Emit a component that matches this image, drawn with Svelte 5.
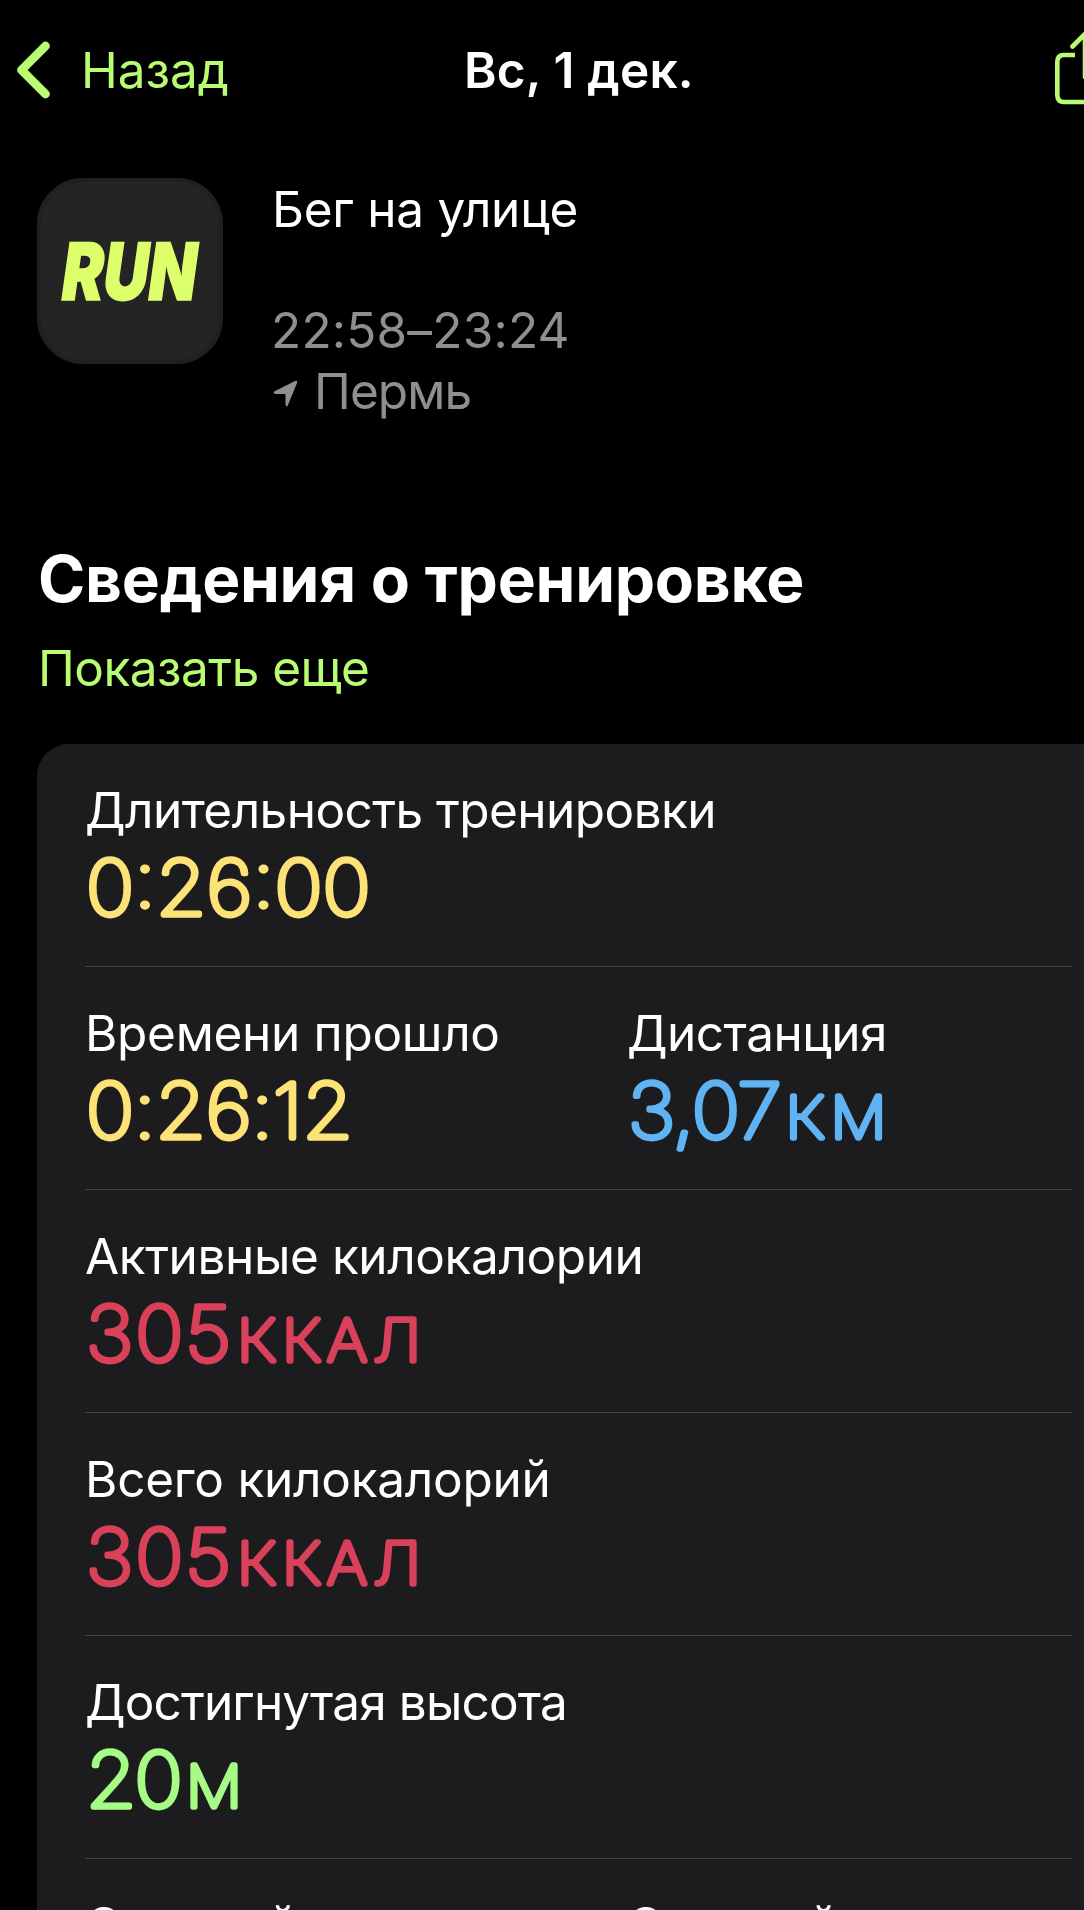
<script lang="ts">
    interface Metric {
        label: string;
        tracking: number;
        value?: string;
        valueTracking?: number;
        unit?: string;
        unitGap?: number;
        color?: string;
    }

    const date = 'Вс, 1 дек.';
    const city = 'Пермь';

    const calories = { value: '305', valueTracking: 1.8, unit: 'ККАЛ', unitGap: 4, color: 'energy' };

    const rows: Metric[][] = [
        [{ label: 'Длительность тренировки', tracking: -0.55, value: '0:26:00', valueTracking: 0, color: 'time' }],
        [
            { label: 'Времени прошло', tracking: -0.3, value: '0:26:12', valueTracking: -0.3, color: 'time' },
            { label: 'Дистанция', tracking: -0.5, value: '3,07', valueTracking: -0.8, unit: 'КМ', unitGap: 4.5, color: 'distance' }
        ],
        [{ label: 'Активные килокалории', tracking: -0.4, ...calories }],
        [{ label: 'Всего килокалорий', tracking: -0.25, ...calories }],
        [{ label: 'Достигнутая высота', tracking: -0.85, value: '20', valueTracking: -2, unit: 'М', unitGap: 5.5, color: 'elevation' }],
        [
            { label: 'Средний темп', tracking: -0.3 },
            { label: 'Средний пульс', tracking: -0.5 }
        ]
    ];
</script>

<main class="screen">
    <header class="nav">
        <button class="back">
            <svg width="36" height="60" viewBox="0 0 36 60" fill="none">
                <path d="M30.5 6 L6.5 30 L30.5 54" stroke="currentColor" stroke-width="8.8" stroke-linecap="round" stroke-linejoin="round" />
            </svg>
            <span>Назад</span>
        </button>
        <h1>{date}</h1>
        <button class="share" aria-label="Поделиться">
            <svg width="60" height="78" viewBox="0 0 60 78" fill="none" stroke="currentColor" stroke-width="4.6">
                <path d="M21 25 H10 Q3.3 25 3.3 32 V65 Q3.3 72 10 72 H53 Q59 72 59 65 V32 Q59 25 53 25 H41" />
                <path d="M31 47 V4 M18.5 16.5 L31 4 L43.5 16.5" stroke-linecap="round" stroke-linejoin="round" />
            </svg>
        </button>
    </header>

    <section class="workout">
        <div class="app-icon"><span>RUN</span></div>
        <div class="info">
            <p class="name">Бег на улице</p>
            <p class="muted time-range">22:58–23:24</p>
            <p class="muted place">
                <svg width="25" height="27" viewBox="0 0 25 27">
                    <path d="M22 1 Q25 0 24 3 L15 25 Q13.5 28 12.5 24.5 V15 Q12.5 14 11.5 14 H2.5 Q-1 13 2 11 Z" fill="currentColor" />
                </svg>
                <span>{city}</span>
            </p>
        </div>
    </section>

    <section class="details">
        <h2>Сведения о тренировке</h2>
        <button class="more">Показать еще</button>

        <div class="card">
            {#each rows as row}
                <div class="row">
                    {#each row as metric}
                        <div class="metric">
                            <div class="label" style:letter-spacing="{metric.tracking}px">{metric.label}</div>
                            {#if metric.value}
                                <!-- svg text so the thin strokes get round joins -->
                                <svg class="value {metric.color}" width="440" height="96">
                                    <text x="1" y="75" transform="scale(1.07 1)" style:letter-spacing="{metric.valueTracking}px">{metric.value}{#if metric.unit}<tspan class="unit" dx={metric.unitGap}>{metric.unit}</tspan>{/if}</text>
                                </svg>
                            {/if}
                        </div>
                    {/each}
                </div>
            {/each}
        </div>
    </section>
</main>

<style>
    :global(body) {
        background: #000;
        overflow: hidden;
    }

    .screen {
        width: 1084px;
        height: 1910px;
        overflow: hidden;
        background: #000;
        color: #fff;
        font-family: Inter, 'Liberation Sans', sans-serif;
        font-size: 49.5px;
        line-height: 60.4px;
    }

    h1,
    h2,
    p {
        margin: 0;
    }

    button {
        padding: 0;
        border: 0;
        background: none;
        color: #b9fb72;
        font: inherit;
    }

    .nav {
        display: grid;
        grid-template-columns: 464px 1fr 30px;
        align-items: center;
        height: 140px;
    }

    .back {
        display: flex;
        align-items: center;
        gap: 30px;
        padding-left: 15px;
    }

    h1 {
        font-size: 49.5px;
        font-weight: 600;
        letter-spacing: 0.2px;
    }

    .share {
        display: flex;
        width: 60px;
        margin-top: -2px;
    }

    .workout {
        display: flex;
        gap: 48px;
        height: 402px;
        padding: 38px 0 0 37px;
        box-sizing: border-box;
    }

    .app-icon {
        display: flex;
        align-items: center;
        justify-content: center;
        width: 186px;
        height: 186px;
        box-sizing: border-box;
        border: 4px solid #202020;
        border-radius: 46px;
        background: #242424;
    }

    .app-icon span {
        color: #dcff6b;
        font-size: 79px;
        font-weight: 900;
        line-height: 81px;
        margin-top: 1px;
        -webkit-text-stroke: 1.5px currentColor;
        transform: skewX(-8deg) scaleX(0.79);
    }

    .info {
        padding-top: 1px;
    }

    .name {
        padding-left: 1px;
        letter-spacing: -0.25px;
    }

    .muted {
        color: #8e8e93;
    }

    .time-range {
        margin-top: 60.4px;
        letter-spacing: 0.2px;
    }

    .place {
        display: flex;
        align-items: center;
        gap: 16px;
        padding: 1px 0 0 2px;
        letter-spacing: -0.9px;
    }

    .place svg {
        margin-top: 4px;
    }

    h2 {
        padding-left: 38px;
        font-size: 64px;
        font-weight: 700;
        line-height: 74px;
        letter-spacing: -0.25px;
    }

    .more {
        display: block;
        height: 60px;
        margin: 22px 0 46px 38px;
        letter-spacing: -0.5px;
    }

    .card {
        height: 1200px;
        margin-left: 37px;
        padding-left: 48px;
        border-radius: 32px 0 0 0;
        background: #1c1c1e;
    }

    .row {
        display: grid;
        grid-template-columns: 542px 1fr;
        width: 987px;
        height: 223px;
        padding-top: 36px;
        box-sizing: border-box;
        border-bottom: 1px solid #414143;
    }

    .label {
        white-space: nowrap;
    }

    .value {
        display: block;
        overflow: visible;
        font-size: 76px;
        font-weight: 100;
        fill: currentColor;
        stroke: currentColor;
        stroke-width: 5.4px;
        stroke-linejoin: round;
        stroke-linecap: round;
    }

    .unit {
        font-size: 58px;
        letter-spacing: 6px;
    }

    .time {
        color: #fce277;
    }

    .distance {
        color: #5fb3f3;
    }

    .energy {
        color: #d9405a;
    }

    .elevation {
        color: #a5fb85;
    }
</style>
